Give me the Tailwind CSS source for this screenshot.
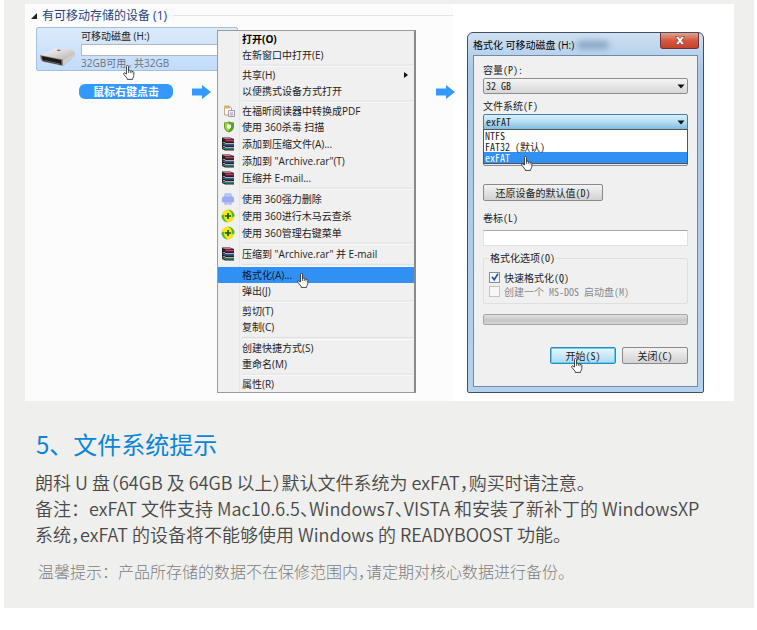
<!DOCTYPE html>
<html lang="zh-CN">

<head>
  <meta charset="UTF-8">
  <meta name="viewport" content="width=device-width, initial-scale=1.0">
  <script src="https://cdn.jsdelivr.net/npm/@tailwindcss/browser@4"></script>
  <title>文件系统提示</title>
</head>

<body class="bg-white font-['Noto_Sans_CJK_SC',sans-serif]">

  <!-- shared icons -->
  <svg class="hidden" aria-hidden="true">
    <symbol id="arrow" viewBox="0 0 19 14">
      <path d="M0 3.500h10V0l9 7-9 7v-3.500H0z" fill="#3399ff" />
    </symbol>
    <symbol id="hand" viewBox="0 0 12 15">
      <path d="M3.500 9V1.500q0-1 1-1t1 1V5.500q1-.8 1.800.4q1-.6 1.700.5q1.500-.4 1.800 1v3q0 1.500-1.200 3v1H4.200v-1L.8 9.300q-.6-1.300.7-1.500z" fill="#fff" stroke="#333" stroke-width=".9" />
      <path d="M5.500 5v3M7.300 6v2M9 6.500v2" stroke="#333" stroke-width=".7" fill="none" />
    </symbol>
    <symbol id="rar" viewBox="0 0 14 14">
      <path d="M1 .5h8l4 1.500v11.500H4L1 12z" fill="#262026" />
      <path d="M1.500 1h7.500l3 1.200H4.500z" fill="#e66a8c" />
      <path d="M4.500 3h8.500v1.300H4.500z" fill="#c43a6b" />
      <path d="M1.500 5h1.500l1.500 1h8.500v.8H4.500z" fill="#ddd" />
      <path d="M4.500 7.200h8.500v1.300H4.500L1.500 7.300V6.500z" fill="#3f66b8" />
      <path d="M1.500 9h1.500l1.500 1h8.500v.7H4.500z" fill="#ddd" />
      <path d="M4.500 11.200h8.500v1.300H4.500l-3-1.200v-1z" fill="#2c9a78" />
    </symbol>
    <symbol id="plus" viewBox="0 0 14 14">
      <circle cx="7" cy="7" r="6.500" fill="#f5e51c" />
      <path d="M7 .5A6.500 6.500 0 0 1 13.500 7q-1 1.500-3 1Q12 3 7 .5zM7 13.500A6.500 6.500 0 0 1 .5 7q1-2 3-1Q2 11 7 13.500z" fill="#4db82e" />
      <path d="M6.200 4h1.700v2.200H10v1.600H7.900V10H6.200V7.800H4V6.200h2.200z" fill="#145c1c" />
    </symbol>
    <symbol id="down" viewBox="0 0 8 5">
      <path d="M.5.500h7L4 4.500z" fill="#111" />
    </symbol>
  </svg>

  <main class="ml-1 mr-[3px] bg-[#efefee] pt-1 pb-[25px]">

    <figure class="mx-[21px] mr-5 bg-white flex items-start pb-2">

      <!-- explorer -->
      <section class="w-[428px] h-[397px] -mb-2 shrink-0 bg-[#fcfcfc] text-[10px] leading-4 text-[#222]">
        <h2 class="flex items-center h-[23px] pl-[6px] text-[12px] text-[#26427e]">
          <svg class="w-[6px] h-[6px] mr-[5px]" viewBox="0 0 6 6"><path d="M6 0v6H0z" fill="#222" /></svg>
          <span class="font-['Open_Sans','Noto_Sans_CJK_SC',sans-serif]">有可移动存储的设备 (1)</span>
          <span class="ml-[6px] h-px grow bg-[#e3e4e8]"></span>
        </h2>
        <div class="flex items-start font-['Open_Sans','Noto_Sans_CJK_SC',sans-serif]">
          <div class="w-[192px] shrink-0">
            <div class="ml-[11px] w-[202px] h-[44px] rounded-xs border border-[#a5c0de] bg-linear-to-b from-[#dcebfb] to-[#c1dbfa] flex">
              <svg class="w-[38px] h-[26px] mt-[16px] ml-[2px] mr-[4px] shrink-0" viewBox="0 0 38 26">
                <defs>
                  <linearGradient id="metal" x1="0" y1="0" x2="1" y2="1">
                    <stop offset="0" stop-color="#fafafa" />
                    <stop offset="1" stop-color="#b5b2b0" />
                  </linearGradient>
                </defs>
                <path d="M2 11L16 4.500 33 5.500 36 9 24 16z" fill="url(#metal)" />
                <path d="M1 11l23 4.500L36 8v3.500L24 22 3 17.500Q1 15 1 11z" fill="#8d8987" />
                <path d="M24 15.500L36 8v4L24 22z" fill="#cfcccb" />
                <path d="M2.500 12l20 4v5l-18-4Q2.500 15 2.500 12z" fill="#1d1b1b" />
                <path d="M5 16l16 3.500v1L6 17z" fill="#6a6563" />
                <path d="M19 5.500l3 .6-1.500.9-3-.6z" fill="#7a5b4d" />
              </svg>
              <div class="grow">
                <p class="leading-4">可移动磁盘 (H:)</p>
                <div class="h-[12px] border border-[#b5b9bf] bg-white"></div>
                <p class="text-[10px] leading-[14px] text-[#6b7380] relative">32GB可用 , 共32GB
                  <svg class="absolute left-[42px] top-[9px] w-3 h-[15px]"><use href="#hand" /></svg>
                </p>
              </div>
            </div>
            <div class="flex items-center mt-[13px] ml-[54px]">
              <strong class="w-[94px] h-[15px] leading-[15px] rounded-md bg-[#3399ff] text-white text-center text-[11px] font-bold">鼠标右键点击</strong>
              <svg class="w-[19px] h-[14px] ml-[19px]"><use href="#arrow" /></svg>
            </div>
          </div>

          <!-- context menu -->
          <div role="menu" class="relative z-10 mt-[3px] w-[199px] shrink-0 border border-r-2 border-[#9b9b9b] border-r-[#8a8a8a] bg-[#f0f0f0]">
            <div class="absolute inset-y-0 left-[21px] w-px bg-[#e6e6e6]"></div>
            <button role="menuitem" class="relative flex w-full h-4 items-center pl-6 font-bold text-black">打开(O)</button>
            <button role="menuitem" class="relative flex w-full h-4 items-center pl-6">在新窗口中打开(E)</button>
            <hr class="relative h-[4px] ml-6 border-0 bg-linear-to-b from-transparent from-25% via-[#e2e2e2] via-50% to-white">
            <button role="menuitem" class="relative flex w-full h-4 items-center pl-6">共享(H)
              <svg class="w-[4px] h-[6px] ml-auto mr-[6px]" viewBox="0 0 4 6"><path d="M0 0l4 3-4 3z" fill="#111" /></svg>
            </button>
            <button role="menuitem" class="relative flex w-full h-4 items-center pl-6">以便携式设备方式打开</button>
            <hr class="relative h-[4px] ml-6 border-0 bg-linear-to-b from-transparent from-25% via-[#e2e2e2] via-50% to-white">
            <button role="menuitem" class="relative flex w-full h-4 items-center pl-[5px]">
              <svg class="w-3 h-3 mr-[7px]" viewBox="0 0 12 12">
                <path d="M1.500 1h5l2 2v7h-7z" fill="#fff" stroke="#b09868" stroke-width=".8" />
                <path d="M1 1h6v2.500H1z" fill="#d6b26a" />
                <path d="M5.500 5.500h6v6h-6z" fill="#eef" stroke="#8d8093" stroke-width=".8" />
                <path d="M7 8h3M7 9.800h3" stroke="#8d8093" stroke-width=".7" />
              </svg>在福昕阅读器中转换成PDF
            </button>
            <button role="menuitem" class="relative flex w-full h-4 items-center pl-[5px]">
              <svg class="w-3 h-3 mr-[7px]" viewBox="0 0 12 12">
                <path d="M1 1.500q3 0 5-1 2 1 5 1v4q0 4-5 6-5-2-5-6z" fill="#5a9e2e" />
                <path d="M2 2.300q2.500 0 4-.8v9Q2 8.500 2 5.500z" fill="#a5d63c" />
                <path d="M4 3.500h4v3L6 8.500l-2-2z" fill="#f6fbe6" />
              </svg>使用 360杀毒 扫描
            </button>
            <button role="menuitem" class="relative flex w-full h-[17px] items-center pl-[3px]"><svg class="w-[14px] h-[14px] mr-[7px]"><use href="#rar" /></svg>添加到压缩文件(A)...</button>
            <button role="menuitem" class="relative flex w-full h-[17px] items-center pl-[3px]"><svg class="w-[14px] h-[14px] mr-[7px]"><use href="#rar" /></svg>添加到 "Archive.rar"(T)</button>
            <button role="menuitem" class="relative flex w-full h-[17px] items-center pl-[3px]"><svg class="w-[14px] h-[14px] mr-[7px]"><use href="#rar" /></svg>压缩并 E-mail...</button>
            <hr class="relative h-[4px] ml-6 border-0 bg-linear-to-b from-transparent from-25% via-[#e2e2e2] via-50% to-white">
            <button role="menuitem" class="relative flex w-full h-[17px] items-center pl-[3px]">
              <svg class="w-[14px] h-[14px] mr-[7px]" viewBox="0 0 14 14">
                <path d="M3 5V3Q3 1 5 1h4q2 0 2 2v2z" fill="#b9c3f4" />
                <path d="M2.500 4.500h9q1.500 0 1.500 2v2.500q0 1.500-1.500 1.500h-9Q1 10.500 1 9V6.500q0-2 1.500-2z" fill="#9cabf0" />
                <path d="M3 10h8v1.500l-1 1.500H8.500L7 12l-1.500 1H4l-1-1.500z" fill="#b4bff2" />
              </svg>使用 360强力删除
            </button>
            <button role="menuitem" class="relative flex w-full h-[17px] items-center pl-[3px]"><svg class="w-[14px] h-[14px] mr-[7px]"><use href="#plus" /></svg>使用 360进行木马云查杀</button>
            <button role="menuitem" class="relative flex w-full h-[17px] items-center pl-[3px]"><svg class="w-[14px] h-[14px] mr-[7px]"><use href="#plus" /></svg>使用 360管理右键菜单</button>
            <hr class="relative h-[4px] ml-6 border-0 bg-linear-to-b from-transparent from-25% via-[#e2e2e2] via-50% to-white">
            <button role="menuitem" class="relative flex w-full h-[17px] items-center pl-[3px]"><svg class="w-[14px] h-[14px] mr-[7px]"><use href="#rar" /></svg>压缩到 "Archive.rar" 并 E-mail</button>
            <hr class="relative h-[5px] ml-6 border-0 bg-linear-to-b from-transparent from-25% via-[#e2e2e2] via-50% to-white">
            <button role="menuitem" class="relative flex w-full h-4 items-center pl-6 bg-[#3090f4] text-[#0b1a33]">格式化(A)...
              <svg class="absolute left-[79px] top-[6px] w-3 h-[15px] z-10"><use href="#hand" /></svg>
            </button>
            <button role="menuitem" class="flex w-full h-4 items-center pl-6">弹出(J)</button>
            <hr class="relative h-[4px] ml-6 border-0 bg-linear-to-b from-transparent from-25% via-[#e2e2e2] via-50% to-white">
            <button role="menuitem" class="relative flex w-full h-4 items-center pl-6">剪切(T)</button>
            <button role="menuitem" class="relative flex w-full h-4 items-center pl-6">复制(C)</button>
            <hr class="relative h-[5px] ml-6 border-0 bg-linear-to-b from-transparent from-25% via-[#e2e2e2] via-50% to-white">
            <button role="menuitem" class="relative flex w-full h-4 items-center pl-6">创建快捷方式(S)</button>
            <button role="menuitem" class="relative flex w-full h-4 items-center pl-6">重命名(M)</button>
            <hr class="relative h-[4px] ml-6 border-0 bg-linear-to-b from-transparent from-25% via-[#e2e2e2] via-50% to-white">
            <button role="menuitem" class="relative flex w-full h-4 items-center pl-6">属性(R)</button>
          </div>

          <svg class="w-[19px] h-[14px] mt-[58px] ml-[20px] shrink-0"><use href="#arrow" /></svg>
        </div>
      </section>

      <!-- format dialog -->
      <section class="ml-[14px] mt-[28px] w-[237px] shrink-0 rounded-t-md rounded-b-xs border border-[#3f5063] bg-linear-to-b from-[#cfe0f2] via-[#a9c9e8] via-10% to-[#b4d1ee] px-[5px] pb-[5px] text-[10px] text-[#222] font-['Noto_Sans_Mono_CJK_SC','Noto_Sans_CJK_SC',monospace]">
        <header class="flex items-start h-[22px] -mr-px">
          <h2 class="pt-[4px] leading-4 text-black font-['Open_Sans','Noto_Sans_CJK_SC',sans-serif]">格式化 可移动磁盘 (H:)</h2>
          <span class="mt-[8px] ml-[3px] w-8 h-2 rounded-full bg-[#6f8fb0]/70 blur-[3px]"></span>
          <button aria-label="关闭" class="ml-auto w-[39px] h-4 rounded-b-[3px] border border-t-0 border-[#6b3535] bg-linear-to-b from-[#e3a08f] via-[#d2593f] via-50% to-[#c7422a] flex items-center justify-center">
            <svg class="w-[10px] h-[9px]" viewBox="0 0 10 9"><path d="M.5.500h3L5 2.600 6.500.5h3L6.600 4.500l2.900 4h-3L5 6.400 3.500 8.500h-3l2.900-4z" fill="#fff" stroke="#693030" stroke-width=".6" /></svg>
          </button>
        </header>
        <form class="border border-[#6e8ba8] bg-[#f0f0f0] pl-[9px] pr-[9px] pt-[6px] pb-[22px]">
          <label for="capacity" class="block leading-4">容量(P):</label>
          <div class="relative">
            <select id="capacity" class="block w-full h-4 px-[2px] leading-[14px] appearance-none rounded-xs border border-[#8d8d8d] bg-linear-to-b from-[#f5f5f5] to-[#d6d6d6]">
              <option>32 GB</option>
            </select>
            <svg class="absolute right-[3px] top-[6px] w-2 h-[5px]"><use href="#down" /></svg>
          </div>
          <label for="fs" class="block mt-[4px] leading-4">文件系统(F)</label>
          <div class="relative">
            <select id="fs" class="block w-full h-4 px-[2px] leading-[14px] appearance-none rounded-xs border border-[#3c7fb1] bg-linear-to-b from-[#dcf0fb] via-[#b2dcf3] to-[#7fbde2]">
              <option>exFAT</option>
            </select>
            <svg class="absolute right-[3px] top-[6px] w-2 h-[5px]"><use href="#down" /></svg>
            <ul role="listbox" class="absolute z-10 left-0 top-[15px] w-full border border-[#555] bg-white leading-[11px]">
              <li role="option" class="px-px h-[11px]">NTFS</li>
              <li role="option" class="px-px h-[11px]">FAT32 (默认)</li>
              <li role="option" aria-selected="true" class="px-px h-[11px] bg-[#3090f4] text-white">exFAT</li>
            </ul>
            <svg class="absolute z-20 left-[38px] top-[42px] w-3 h-[15px]"><use href="#hand" /></svg>
          </div>
          <select aria-label="分配单元大小(A)" class="block mt-[20px] w-full h-4 appearance-none rounded-xs border border-[#8d8d8d] bg-[#e6e6e6]"></select>
          <button type="button" class="mt-[18px] block w-[120px] h-[17px] leading-[15px] rounded-xs border border-[#8a8a8a] bg-linear-to-b from-[#f3f3f3] to-[#d2d2d2]">还原设备的默认值(D)</button>
          <label for="volume" class="block mt-[9px] leading-4">卷标(L)</label>
          <input id="volume" type="text" class="block mt-[4px] w-full h-4 border border-[#e0e0e0] border-t-[#a8a8a8] bg-white px-1">
          <fieldset class="mt-[4px] h-[54px] w-full rounded-xs border border-[#dfdfdf] px-[5px]">
            <legend class="leading-4 px-px">格式化选项(O)</legend>
            <label class="mt-[4px] flex items-center h-[14px]">
              <input type="checkbox" checked class="peer sr-only">
              <span class="mr-[4px] w-[11px] h-[11px] border border-[#8c8c8c] bg-[#f4f8fc] flex items-center justify-center">
                <svg class="w-[8px] h-[8px]" viewBox="0 0 8 8"><path d="M1 3.800l2.200 3L7 .8" stroke="#2b4f9b" stroke-width="1.600" fill="none" /></svg>
              </span>快速格式化(Q)
            </label>
            <label class="flex items-center h-[14px] text-[#8a8a8a]">
              <input type="checkbox" disabled class="mr-[4px] w-[11px] h-[11px] appearance-none border border-[#c4c4c4] bg-[#f7f7f7]">创建一个 MS-DOS 启动盘(M)
            </label>
          </fieldset>
          <div role="progressbar" aria-label="进度" class="mt-[10px] h-[11px] rounded-xs border border-[#a6a6a6] bg-linear-to-b from-[#e2e2e2] via-[#c6c6c6] via-60% to-[#d6d6d6]"></div>
          <div class="mt-[22px] flex justify-end gap-[6px]">
            <button type="button" class="relative w-[66px] h-[17px] leading-[15px] rounded-xs border border-[#2e8ab5] bg-linear-to-b from-[#eaf6fd] to-[#a9dbf5] ring-1 ring-inset ring-[#5fd0f5]">开始(S)
              <svg class="absolute left-[20px] top-[10px] w-3 h-[15px]"><use href="#hand" /></svg>
            </button>
            <button type="button" class="w-[66px] h-[17px] leading-[15px] rounded-xs border border-[#8a8a8a] bg-linear-to-b from-[#f3f3f3] to-[#d2d2d2]">关闭(C)</button>
          </div>
        </form>
      </section>
    </figure>

    <!-- notes -->
    <section class="pl-[31px] pr-5 pt-[25px]">
      <h1 class="pl-px text-[24px] leading-9 text-[#0a86d8]">5、文件系统提示</h1>
      <div class="mt-[7px] text-[18px] leading-[26px] font-[350] text-[#484848]">
        <p class="[font-feature-settings:'halt']">朗科 U 盘（64GB 及 64GB 以上）默认文件系统为 exFAT，购买时请注意。</p>
        <p>备注：<span class="[font-feature-settings:'halt']">exFAT 文件支持 Mac10.6.5、Windows7、VISTA 和安装了新补丁的 WindowsXP</span></p>
        <p class="[font-feature-settings:'halt']">系统，exFAT 的设备将不能够使用 Windows 的 READYBOOST 功能。</p>
      </div>
      <p class="mt-[12px] pl-[3px] text-[16px] leading-6 font-light text-[#7d7d7d]">温馨提示：<span class="[font-feature-settings:'halt']">产品所存储的数据不在保修范围内，请定期对核心数据进行备份。</span></p>
    </section>
  </main>

</body>

</html>
